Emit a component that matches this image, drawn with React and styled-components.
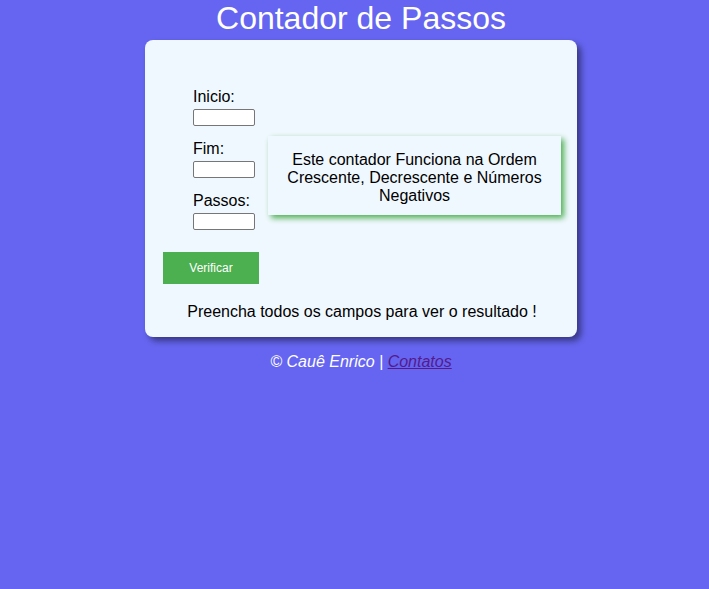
import React from 'react';
import styled, {createGlobalStyle} from 'styled-components';

const GlobalStyle = createGlobalStyle`
    body {
        margin: 0;
        background-color: #6565f1;
        font-family: "Liberation Sans", Arial, sans-serif;
    }
`
const Page = styled.div`
    display: flex;
    flex-direction: column;
    align-items: center;
    padding-left: 13px;
`
const Title = styled.h1`
    margin: 0 0 3px;
    font-size: 32px;
    font-weight: normal;
    color: white;
    line-height: 37px;
`
const Card = styled.div`
    box-sizing: border-box;
    width: 432px;
    padding: 48px 16px 16px 18px;
    background-color: aliceblue;
    border-radius: 8px;
    box-shadow: 4px 4px 6px rgba(0, 0, 0, 0.45);
`
const Row = styled.div`
    display: flex;
`
const Side = styled.div`
    width: 105px;
    display: flex;
    flex-direction: column;
`
const Fields = styled.div`
    display: flex;
    flex-direction: column;
    gap: 14px;
    padding-left: 30px;
`
const Group = styled.div`
    display: flex;
    flex-direction: column;
    align-items: flex-start;
`
const Label = styled.label`
    font-size: 16px;
    line-height: 18px;
    margin-bottom: 3px;
    color: black;
`
const Input = styled.input`
    box-sizing: border-box;
    width: 62px;
    height: 17px;
    margin: 0;
    border: 1px solid #767676;
    border-radius: 2px;
    background: white;
`
const Button = styled.button`
    margin-top: 22px;
    width: 96px;
    height: 32px;
    border: none;
    background-color: #4caf50;
    color: white;
    font-family: "Liberation Sans", Arial, sans-serif;
    font-size: 12px;
    cursor: pointer;
`
const Info = styled.div`
    box-sizing: border-box;
    width: 293px;
    height: 79px;
    margin-top: 48px;
    padding: 15px 10px 10px;
    background-color: aliceblue;
    box-shadow: 3px 3px 6px #4caf50;
    text-align: center;
    font-size: 16px;
    line-height: 18px;
    color: black;
`
const Result = styled.p`
    margin: 19px 0 0;
    text-align: center;
    font-size: 16px;
    line-height: 18px;
    color: black;
`
const Footer = styled.p`
    margin: 16px 0 0;
    font-size: 16px;
    line-height: 18px;
    font-style: italic;
    color: white;
    a {
        color: #551a8b;
    }
`

export default function App() {
    return (
        <>
            <GlobalStyle />
            <Page>
                <Title>Contador de Passos</Title>
                <Card>
                    <Row>
                        <Side>
                            <Fields>
                                <Group>
                                    <Label htmlFor='inicio'>Inicio:</Label>
                                    <Input id='inicio' type='number' />
                                </Group>
                                <Group>
                                    <Label htmlFor='fim'>Fim:</Label>
                                    <Input id='fim' type='number' />
                                </Group>
                                <Group>
                                    <Label htmlFor='passos'>Passos:</Label>
                                    <Input id='passos' type='number' />
                                </Group>
                            </Fields>
                            <Button type='button'>Verificar</Button>
                        </Side>
                        <Info>Este contador Funciona na Ordem Crescente, Decrescente e Números Negativos</Info>
                    </Row>
                    <Result>Preencha todos os campos para ver o resultado !</Result>
                </Card>
                <Footer>© Cauê Enrico | <a href='#'>Contatos</a></Footer>
            </Page>
        </>
    )
}
